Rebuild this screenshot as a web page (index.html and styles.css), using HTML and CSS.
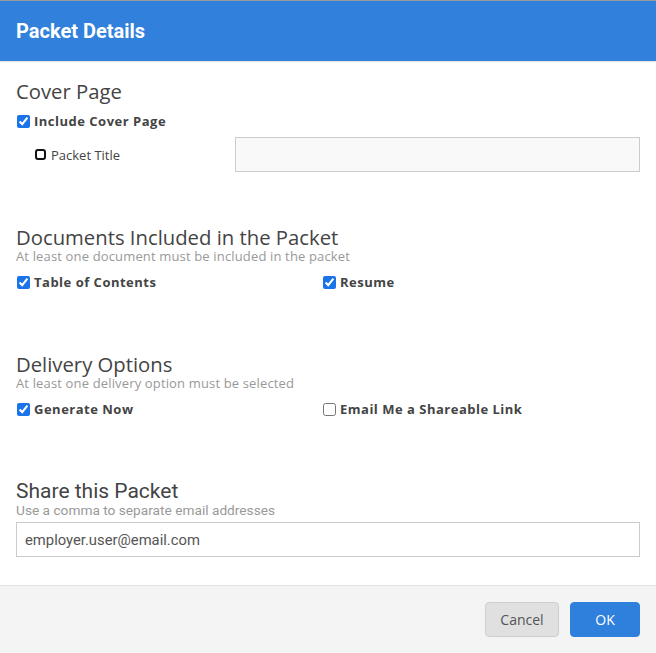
FILE: index.html
```html
<!DOCTYPE html>
<html>
<head>
<meta charset="utf-8">
<link rel="stylesheet" href="styles.css">
</head>
<body>
<div class="dialog">
  <div class="header"><h1 class="title">Packet Details</h1></div>
  <div class="content">
    <section class="section cover">
      <h2 class="heading">Cover Page</h2>
      <label class="check bold"><input type="checkbox" checked> Include Cover Page</label>
      <div class="title-row">
        <label class="check plain"><span class="fake-box"></span>Packet Title</label>
        <input class="text-input title-input" type="text">
      </div>
    </section>
    <section class="section docs">
      <h2 class="heading">Documents Included in the Packet</h2>
      <p class="hint">At least one document must be included in the packet</p>
      <div class="two-col">
        <label class="check bold"><input type="checkbox" checked> Table of Contents</label>
        <label class="check bold"><input type="checkbox" checked> Resume</label>
      </div>
    </section>
    <section class="section delivery">
      <h2 class="heading">Delivery Options</h2>
      <p class="hint">At least one delivery option must be selected</p>
      <div class="two-col">
        <label class="check bold"><input type="checkbox" checked> Generate Now</label>
        <label class="check bold"><input type="checkbox"> Email Me a Shareable Link</label>
      </div>
    </section>
    <section class="section share">
      <h2 class="heading roboto">Share this Packet</h2>
      <p class="hint roboto">Use a comma to separate email addresses</p>
      <input class="text-input email-input" type="text" value="employer.user@email.com">
    </section>
  </div>
  <div class="footer">
    <button class="btn cancel">Cancel</button>
    <button class="btn ok">OK</button>
  </div>
</div>
</body>
</html>
```
FILE: styles.css
```css
html, body {
  margin: 0;
  padding: 0;
  background: #fff;
}
body {
  font-family: "Open Sans", "Liberation Sans", sans-serif;
  color: #444;
}
.dialog {
  width: 656px;
  height: 653px;
  display: flex;
  flex-direction: column;
  border-top: 1px solid #9a9a9a;
  box-sizing: border-box;
}
.header {
  height: 60px;
  background: #3080dc;
  border-bottom: 1px solid #e2e2e2;
  display: flex;
  align-items: center;
  padding-left: 16px;
}
.title {
  margin: 0;
  font-family: Roboto, "Liberation Sans", sans-serif;
  font-weight: 700;
  font-size: 20px;
  color: #fff;
  line-height: 24px;
}
.content {
  flex: 1;
  padding: 0 16px;
}
.heading {
  margin: 0;
  font-weight: 400;
  font-size: 20.3px;
  line-height: 22px;
  color: #444;
}
.hint {
  margin: 0;
  font-size: 13px;
  letter-spacing: 0.15px;
  line-height: 16px;
  color: #999;
}
.roboto {
  font-family: Roboto, "Liberation Sans", sans-serif;
}
.share .heading { font-size: 21px; }
.share .hint { font-size: 13.7px; letter-spacing: 0; line-height: 16px; }
.check {
  display: flex;
  align-items: center;
  font-size: 13px;
  line-height: 18px;
  color: #444;
}
.check input {
  margin: 0 4px 0 1px;
  width: 13px;
  height: 13px;
  accent-color: #1a73e8;
}
.bold { font-weight: 700; letter-spacing: 0.5px; }
.plain { font-weight: 400; font-size: 13px; }
.fake-box {
  width: 11px;
  height: 11px;
  box-sizing: border-box;
  border: 2px solid #111;
  border-radius: 3px;
  margin-right: 5px;
}
.section.cover { margin-top: 18px; }
.cover .check.bold { margin-top: 10px; }
.title-row {
  display: flex;
  align-items: center;
  padding-left: 19px;
  margin-top: 7px;
}
.title-row .check { width: 200px; }
.text-input {
  box-sizing: border-box;
  height: 35px;
  border: 1px solid #cccccc;
  background: #f9f9f9;
  outline: none;
}
.title-input { flex: 1; }
.section.docs { margin-top: 54px; }
.section.delivery { margin-top: 62px; }
.section.share { margin-top: 62px; }
.two-col {
  display: grid;
  grid-template-columns: 306px 1fr;
  margin-top: 9px;
}
.email-input {
  width: 100%;
  margin-top: 4px;
  background: #fff;
  padding: 0 8px;
  font-family: Roboto, "Liberation Sans", sans-serif;
  font-size: 14.8px;
  color: #555;
}
.footer {
  height: 67px;
  background: #f4f4f4;
  border-top: 1px solid #e4e4e4;
  display: flex;
  justify-content: flex-end;
  align-items: center;
  gap: 11px;
  padding-right: 16px;
}
.btn {
  height: 35px;
  border-radius: 4px;
  font-family: "Open Sans", "Liberation Sans", sans-serif;
  font-size: 14px;
  cursor: pointer;
}
.cancel {
  width: 74px;
  background: #e0e0e0;
  border: 1px solid #cfcfcf;
  color: #555;
}
.ok {
  width: 70px;
  background: #2f80dc;
  border: 1px solid #2f80dc;
  color: #fff;
}
```
